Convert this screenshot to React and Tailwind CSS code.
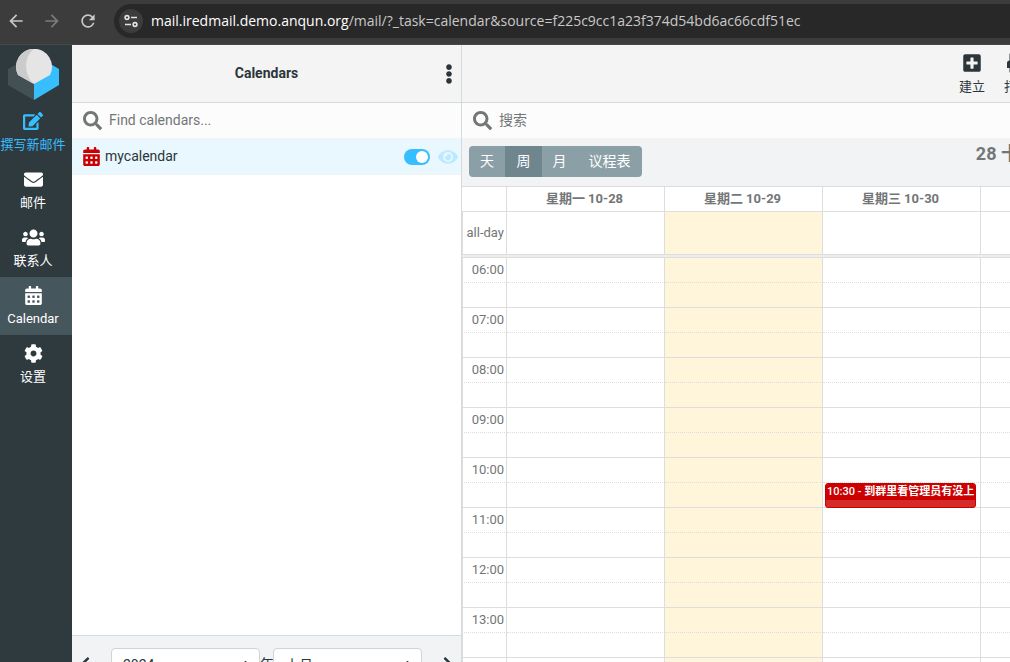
import { useState } from "react";
import {
  FaEdit,
  FaEnvelope,
  FaUsers,
  FaCalendarAlt,
  FaCog,
  FaSearch,
  FaEllipsisV,
  FaEye,
  FaPlusSquare,
  FaPrint,
  FaChevronLeft,
  FaChevronRight,
} from "react-icons/fa";
import { MdArrowBack, MdArrowForward, MdRefresh } from "react-icons/md";

const menu = [
  { id: "compose", label: "撰写新邮件", icon: FaEdit, size: 20 },
  { id: "mail", label: "邮件", icon: FaEnvelope, size: 19 },
  { id: "contacts", label: "联系人", icon: FaUsers, size: 23 },
  { id: "calendar", label: "Calendar", icon: FaCalendarAlt, size: 19 },
  { id: "settings", label: "设置", icon: FaCog, size: 19 },
];

const views = [
  { id: "day", label: "天", width: "w-[36px]" },
  { id: "week", label: "周", width: "w-[37px]" },
  { id: "month", label: "月", width: "w-[35px]" },
  { id: "agenda", label: "议程表", width: "w-[65px]" },
];

const days = [
  { label: "星期一 10-28" },
  { label: "星期二 10-29", today: true },
  { label: "星期三 10-30" },
];

const hours = ["06:00", "07:00", "08:00", "09:00", "10:00", "11:00", "12:00", "13:00", "14:00"];

const event = { day: 2, hour: "10:00", time: "10:30", title: "到群里看管理员有没上" };

function BrowserBar() {
  return (
    <div className="flex h-[45px] shrink-0 items-center border-b border-[#484848] bg-[#3c3c3c] pb-[3px]">
      <div className="flex shrink-0 items-center gap-4 pl-[6px] text-[#c7c7c7]">
        <button aria-label="Back"><MdArrowBack size={20} /></button>
        <button aria-label="Forward" className="text-[#7b7b7b]"><MdArrowForward size={20} /></button>
        <button aria-label="Reload"><MdRefresh size={20} /></button>
      </div>
      <div className="ml-4 flex h-[34px] min-w-0 flex-1 items-center rounded-l-full bg-[#282828] pl-[5px]">
        <button aria-label="Site information" className="flex size-6 shrink-0 items-center justify-center rounded-full bg-[#3c3c3c]">
          <svg width="14" height="14" viewBox="0 0 14 14" fill="none" stroke="#e3e3e3" strokeWidth="1.6">
            <circle cx="3" cy="3.5" r="1.9" />
            <path d="M7 3.5h6M1 10.5h6" />
            <circle cx="11" cy="10.5" r="1.9" />
          </svg>
        </button>
        <span className="ml-2 truncate font-['Open_Sans',sans-serif] text-[14px] text-[#c9c9c9]">
          <span className="text-white">mail.iredmail.demo.anqun.org</span>
          /mail/?_task=calendar&amp;source=f225c9cc1a23f374d54bd6ac66cdf51ec
        </span>
      </div>
    </div>
  );
}

function Logo() {
  return (
    <svg className="ml-2" width="52" height="52" viewBox="0 0 52 52">
      <path d="M0 20 13 13 26 35V51L0 36Z" fill="#435157" />
      <path d="M51 20 39 13 26 35V51L51 36Z" fill="#37beff" />
      <path d="M10 26A18 18 0 1 1 42 26L26 35Z" fill="#e5e5e5" />
      <path d="M26 0A18 18 0 0 0 10 26L26 35C16 27 15 8 26 0Z" fill="#cbcbcb" />
    </svg>
  );
}

function Sidebar() {
  return (
    <nav className="w-[72px] shrink-0 bg-[#2f3a3f] pt-[4px]">
      <Logo />
      <div className="mt-[2px]">
        {menu.map(({ id, label, icon: Icon, size }) => (
          <a
            key={id}
            href={`#${id}`}
            className={`flex h-[58px] flex-col items-center gap-1 pt-2 pr-[6px] text-[13px] leading-[20px] whitespace-nowrap ${
              id === "compose" ? "text-[#37beff]" : "text-white"
            } ${id === "calendar" ? "bg-[#46565d]" : ""}`}
          >
            <span className="flex h-5 items-center">
              <Icon size={size} />
            </span>
            {label}
          </a>
        ))}
      </div>
    </nav>
  );
}

function SearchBox({ placeholder }) {
  const [query, setQuery] = useState("");

  return (
    <label className="flex h-[36px] shrink-0 items-center gap-[7px] border-b border-[#f1f3f4] bg-[#fcfcfc] pl-[11px] text-[#737677]">
      <FaSearch size={19} className="shrink-0" />
      <input
        type="text"
        aria-label={placeholder}
        placeholder={placeholder}
        value={query}
        onChange={(e) => setQuery(e.target.value)}
        className="min-w-0 flex-1 bg-transparent text-[14px] outline-none placeholder:text-[#737677]"
      />
    </label>
  );
}

function DateSelect({ label, value }) {
  return (
    <div className="relative w-[149px]">
      <select
        aria-label={label}
        defaultValue={value}
        className="h-[32px] w-full appearance-none rounded border border-[#ced4da] bg-white pl-[11px] text-[14px]"
      >
        <option>{value}</option>
      </select>
      <svg className="pointer-events-none absolute top-3 right-[11px]" width="7" height="10" viewBox="0 0 8 10" fill="#343a40">
        <path d="M4 0 0 4h8ZM4 10 0 6h8Z" />
      </svg>
    </div>
  );
}

function CalendarList() {
  const [enabled, setEnabled] = useState(true);

  return (
    <section className="flex w-[390px] shrink-0 flex-col border-r border-[#d4dbde] bg-white">
      <header className="flex h-[58px] shrink-0 items-center border-b border-[#d4dbde] bg-[#f4f4f4] pr-[2px]">
        <h2 className="flex-1 pl-[22px] text-center text-[14px] font-bold">Calendars</h2>
        <button aria-label="Options"><FaEllipsisV size={20} /></button>
      </header>
      <SearchBox placeholder="Find calendars..." />
      <ul className="min-h-0 flex-1">
        <li className="flex h-[36px] items-center border-b border-[#f1f3f4] bg-[#e9f7fe] pr-[3px] pl-[10px]">
          <FaCalendarAlt size={19} className="text-[#cc0000]" />
          <label htmlFor="mycalendar" className="ml-1 flex-1 text-[14px]">mycalendar</label>
          <input
            id="mycalendar"
            type="checkbox"
            checked={enabled}
            onChange={(e) => setEnabled(e.target.checked)}
            className="h-4 w-[26px] appearance-none rounded-full bg-[#b4bcc0] p-[2px] before:block before:size-3 before:rounded-full before:bg-white checked:bg-[#37beff] checked:before:ml-[10px]"
          />
          <button aria-label="Show only this calendar" className="ml-2 text-[#bce9ff]">
            <FaEye size={20} />
          </button>
        </li>
      </ul>
      <footer className="flex h-[27px] shrink-0 items-start overflow-hidden border-t border-[#d4dbde] bg-[#f1f3f4] px-[5px] pt-3">
        <button aria-label="Previous" className="pt-2"><FaChevronLeft size={16} /></button>
        <div className="flex flex-1 justify-center text-[14px] leading-[32px]">
          <DateSelect label="年" value="2024" />
          <span className="w-[13px] whitespace-nowrap">年</span>
          <DateSelect label="月" value="十月" />
        </div>
        <button aria-label="Next" className="pt-2"><FaChevronRight size={16} /></button>
      </footer>
    </section>
  );
}

function WeekTable() {
  return (
    <table className="w-full table-fixed border-separate border-spacing-0 bg-white text-[13px] leading-[18px] text-[#737677]">
      <colgroup>
        <col className="w-[45px]" />
        {days.map((day) => (
          <col key={day.label} className="w-[158px]" />
        ))}
        <col />
      </colgroup>
      <thead>
        <tr className="h-[26px]">
          <th className="border-y border-r border-[#ddd] p-0"></th>
          {days.map((day) => (
            <th key={day.label} className="border-y border-r border-[#ddd] p-0 pr-[2px] font-bold">{day.label}</th>
          ))}
          <th className="border-y border-[#ddd] p-0"></th>
        </tr>
      </thead>
      <tbody>
        <tr className="h-[43px]">
          <th className="border-r border-b border-l border-[#ddd] p-0 pr-[2px] text-right font-normal">all-day</th>
          {days.map((day) => (
            <td key={day.label} className={`border-r border-b border-[#ddd] ${day.today ? "bg-[#fff5db]" : ""}`}></td>
          ))}
          <td className="border-b border-[#ddd]"></td>
        </tr>
        <tr className="h-[3px]">
          <td colSpan={days.length + 2} className="border-b border-[#ddd] bg-[#eee] p-0"></td>
        </tr>
      </tbody>
      {hours.map((hour) => (
        <tbody key={hour}>
          <tr className="h-[25px]">
            <th className="border-r border-b border-l border-[#ddd] [border-bottom-style:dotted] p-0 pr-[2px] text-right font-normal">{hour}</th>
            {days.map((day) => (
              <td
                key={day.label}
                className={`border-r border-b border-[#ddd] [border-bottom-style:dotted] p-0 ${day.today ? "bg-[#fff5db]" : ""}`}
              ></td>
            ))}
            <td className="border-b border-dotted border-[#ddd] p-0"></td>
          </tr>
          <tr className="h-[25px]">
            <td className="border-r border-b border-l border-[#ddd] p-0"></td>
            {days.map((day, i) => (
              <td key={day.label} className={`relative border-r border-b border-[#ddd] p-0 ${day.today ? "bg-[#fff5db]" : ""}`}>
                {event.day === i && event.hour === hour && (
                  <a
                    href="#event"
                    className="absolute top-0 right-1 left-[2px] h-[25px] overflow-hidden rounded-[3px] border border-[#cc0000] bg-[#d62929] text-[11px] leading-[16px] font-bold whitespace-nowrap text-white"
                  >
                    <div className="bg-[#cc0000] px-px">
                      <span className="font-medium">{event.time} - </span>
                      {event.title}
                    </div>
                  </a>
                )}
              </td>
            ))}
            <td className="border-b border-[#ddd] p-0"></td>
          </tr>
        </tbody>
      ))}
    </table>
  );
}

function CalendarView() {
  const [view, setView] = useState("week");

  return (
    <main className="flex min-w-0 flex-1 flex-col overflow-hidden">
      <header className="flex h-[58px] shrink-0 justify-end border-b border-[#d4dbde] bg-[#f4f4f4] pt-2 text-[13px] leading-[20px]">
        <div className="-mr-5 flex shrink-0 gap-[19px]">
          <button className="flex flex-col items-center gap-1">
            <FaPlusSquare size={20} />
            建立
          </button>
          <button className="flex flex-col items-center gap-1">
            <FaPrint size={20} />
            打印
          </button>
        </div>
      </header>
      <SearchBox placeholder="搜索" />
      <div className="flex h-[47px] shrink-0 justify-between bg-[#f1f3f4] pt-[7px] pl-[7px]">
        <div className="flex h-[31px] overflow-hidden rounded bg-[#8b9fa7]">
          {views.map(({ id, label, width }) => (
            <button
              key={id}
              onClick={() => setView(id)}
              className={`text-[14px] text-white ${width} ${view === id ? "bg-[#6f868f]" : ""}`}
            >
              {label}
            </button>
          ))}
        </div>
        <h2 className="-mr-[27px] text-[18px] leading-[16px] font-bold whitespace-nowrap text-[#737677]">28 十月</h2>
      </div>
      <div className="min-h-0 flex-1 overflow-hidden">
        <WeekTable />
      </div>
    </main>
  );
}

export default function App() {
  return (
    <div className="flex h-screen flex-col overflow-hidden font-[Roboto,'Noto_Sans_CJK_SC',sans-serif] text-[#2c363a]">
      <BrowserBar />
      <div className="flex min-h-0 flex-1">
        <Sidebar />
        <CalendarList />
        <CalendarView />
      </div>
    </div>
  );
}
